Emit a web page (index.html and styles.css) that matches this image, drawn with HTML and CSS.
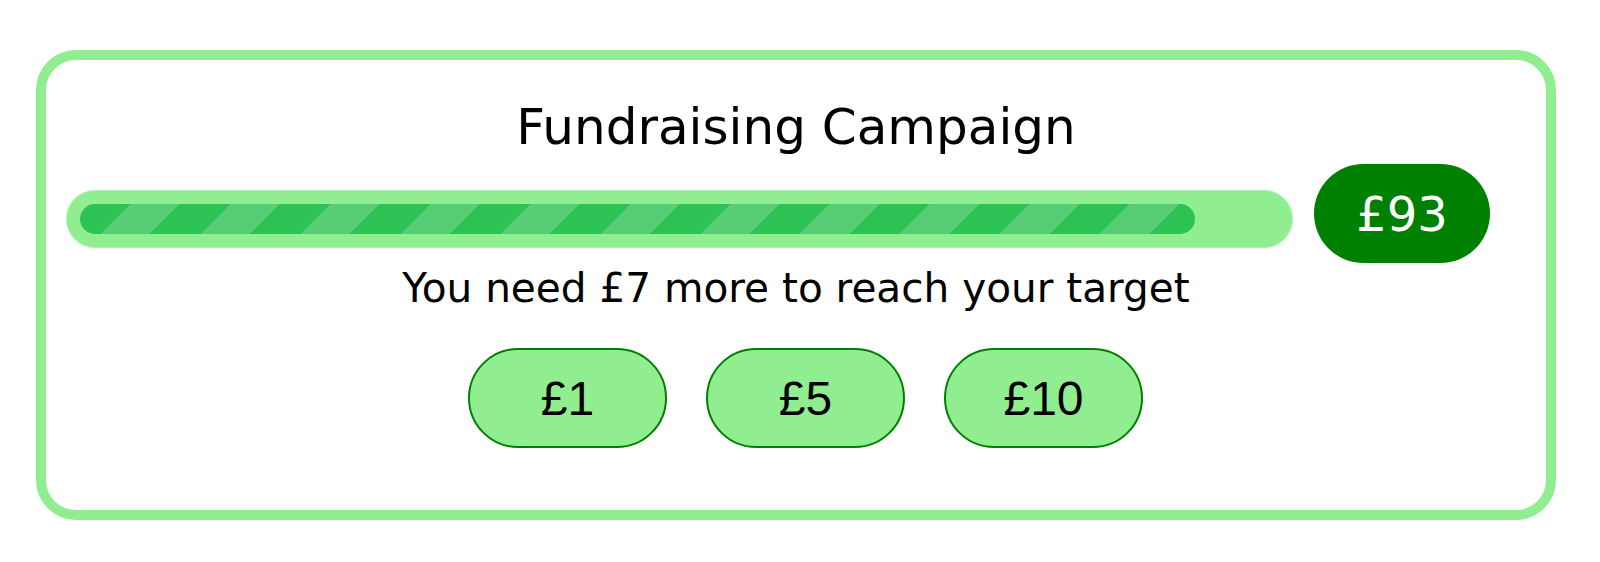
FILE: index.html
```html
<!DOCTYPE html>
<html lang="en">
<head>
<meta charset="utf-8">
<title>Fundraising Campaign</title>
<link rel="stylesheet" href="styles.css">
</head>
<body>
<div class="card">
  <h1 class="title">Fundraising Campaign</h1>
  <div class="progress-row">
    <div class="track">
      <div class="fill" style="width: 93%"></div>
    </div>
    <div class="badge">£93</div>
  </div>
  <p class="remaining">You need £7 more to reach your target</p>
  <div class="donations">
    <button class="donate">£1</button>
    <button class="donate">£5</button>
    <button class="donate">£10</button>
  </div>
</div>
</body>
</html>
```

FILE: styles.css
```css
html, body {
  margin: 0;
  padding: 0;
  background: #ffffff;
}

body {
  font-family: "DejaVu Sans", Verdana, sans-serif;
  color: #000;
}

.card {
  box-sizing: border-box;
  width: 1520px;
  margin: 50px 0 0 36px;
  border: 10px solid #90ee90;
  border-radius: 40px;
  padding: 38px 0 62px 0;
}

.title {
  margin: 0;
  font-weight: normal;
  font-size: 50px;
  line-height: 58px;
  text-align: center;
}

.progress-row {
  display: flex;
  align-items: flex-start;
  margin-top: 8px;
  padding: 0 56px 0 20px;
  gap: 21px;
}

.track {
  flex: 1;
  margin-top: 26px;
  height: 58px;
  box-sizing: border-box;
  padding: 14px;
  background: #90ee90;
  border-radius: 29px;
  box-shadow: inset 0 0 0 1px rgba(255, 255, 255, 0.25);
}

.fill {
  height: 30px;
  border-radius: 15px;
  background: repeating-linear-gradient(
    135deg,
    #2dc254 0,
    #2dc254 35.36px,
    #57ce76 35.36px,
    #57ce76 70.71px
  );
}

.badge {
  width: 176px;
  height: 99px;
  border-radius: 50px;
  background: #008000;
  color: #fff;
  font-size: 48px;
  display: flex;
  align-items: center;
  justify-content: center;
}

.remaining {
  margin: 1px 0 0 0;
  font-size: 40.6px;
  line-height: 48px;
  text-align: center;
}

.donations {
  display: flex;
  justify-content: center;
  gap: 39px;
  margin-top: 36px;
  padding-left: 19px;
}

.donate {
  box-sizing: border-box;
  width: 199px;
  height: 100px;
  border: 2px solid #008000;
  border-radius: 50px;
  background: #90ee90;
  color: #000;
  font-family: "Liberation Sans", Arial, sans-serif;
  font-size: 48px;
  padding: 0;
  cursor: pointer;
}
```
